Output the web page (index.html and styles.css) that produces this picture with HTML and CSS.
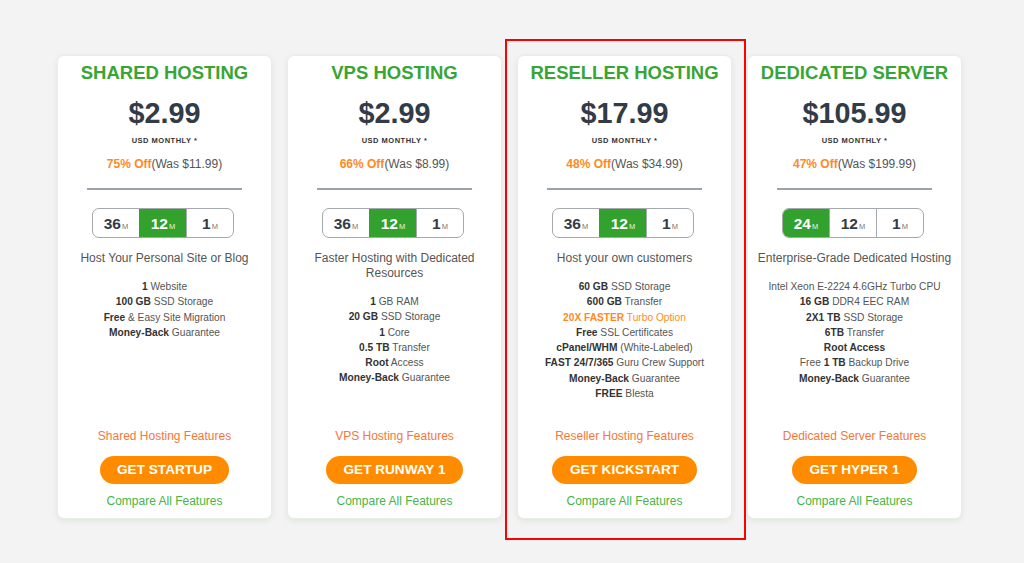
FILE: index.html
```html
<!DOCTYPE html>
<html>
<head>
<meta charset="utf-8">
<link rel="stylesheet" href="styles.css">
</head>
<body>
<div class="plans">
  <div class="card">
    <h2 class="title">SHARED HOSTING</h2>
    <div class="price">$2.99</div>
    <div class="period">USD MONTHLY *</div>
    <div class="discount"><b>75% Off</b>(Was $11.99)</div>
    <hr class="divider">
    <div class="terms">
      <span class="term">36<small>M</small></span>
      <span class="term active">12<small>M</small></span>
      <span class="term">1<small>M</small></span>
    </div>
    <p class="tagline">Host Your Personal Site or Blog</p>
    <ul class="features">
      <li><b>1</b> Website</li>
      <li><b>100 GB</b> SSD Storage</li>
      <li><b>Free</b> &amp; Easy Site Migration</li>
      <li><b>Money-Back</b> Guarantee</li>
    </ul>
    <a class="more">Shared Hosting Features</a>
    <a class="btn">GET STARTUP</a>
    <a class="compare">Compare All Features</a>
  </div>

  <div class="card">
    <h2 class="title">VPS HOSTING</h2>
    <div class="price">$2.99</div>
    <div class="period">USD MONTHLY *</div>
    <div class="discount"><b>66% Off</b>(Was $8.99)</div>
    <hr class="divider">
    <div class="terms">
      <span class="term">36<small>M</small></span>
      <span class="term active">12<small>M</small></span>
      <span class="term">1<small>M</small></span>
    </div>
    <p class="tagline">Faster Hosting with Dedicated Resources</p>
    <ul class="features">
      <li><b>1</b> GB RAM</li>
      <li><b>20 GB</b> SSD Storage</li>
      <li><b>1</b> Core</li>
      <li><b>0.5 TB</b> Transfer</li>
      <li><b>Root</b> Access</li>
      <li><b>Money-Back</b> Guarantee</li>
    </ul>
    <a class="more">VPS Hosting Features</a>
    <a class="btn">GET RUNWAY 1</a>
    <a class="compare">Compare All Features</a>
  </div>

  <div class="card">
    <h2 class="title">RESELLER HOSTING</h2>
    <div class="price">$17.99</div>
    <div class="period">USD MONTHLY *</div>
    <div class="discount"><b>48% Off</b>(Was $34.99)</div>
    <hr class="divider">
    <div class="terms">
      <span class="term">36<small>M</small></span>
      <span class="term active">12<small>M</small></span>
      <span class="term">1<small>M</small></span>
    </div>
    <p class="tagline">Host your own customers</p>
    <ul class="features">
      <li><b>60 GB</b> SSD Storage</li>
      <li><b>600 GB</b> Transfer</li>
      <li class="hot"><b>20X FASTER</b> Turbo Option</li>
      <li><b>Free</b> SSL Certificates</li>
      <li><b>cPanel/WHM</b> (White-Labeled)</li>
      <li><b>FAST 24/7/365</b> Guru Crew Support</li>
      <li><b>Money-Back</b> Guarantee</li>
      <li><b>FREE</b> Blesta</li>
    </ul>
    <a class="more">Reseller Hosting Features</a>
    <a class="btn">GET KICKSTART</a>
    <a class="compare">Compare All Features</a>
  </div>

  <div class="card">
    <h2 class="title">DEDICATED SERVER</h2>
    <div class="price">$105.99</div>
    <div class="period">USD MONTHLY *</div>
    <div class="discount"><b>47% Off</b>(Was $199.99)</div>
    <hr class="divider">
    <div class="terms">
      <span class="term active">24<small>M</small></span>
      <span class="term">12<small>M</small></span>
      <span class="term">1<small>M</small></span>
    </div>
    <p class="tagline">Enterprise-Grade Dedicated Hosting</p>
    <ul class="features">
      <li>Intel Xeon E-2224 4.6GHz Turbo CPU</li>
      <li><b>16 GB</b> DDR4 EEC RAM</li>
      <li><b>2X1 TB</b> SSD Storage</li>
      <li><b>6TB</b> Transfer</li>
      <li><b>Root Access</b></li>
      <li>Free <b>1 TB</b> Backup Drive</li>
      <li><b>Money-Back</b> Guarantee</li>
    </ul>
    <a class="more">Dedicated Server Features</a>
    <a class="btn">GET HYPER 1</a>
    <a class="compare">Compare All Features</a>
  </div>

  <div class="highlight"></div>
</div>
</body>
</html>
```

FILE: styles.css
```css
* { box-sizing: border-box; }

html, body {
  margin: 0;
  padding: 0;
}

body {
  background: #f3f3f3;
  font-family: "Liberation Sans", Arial, sans-serif;
  width: 1024px;
  height: 563px;
  overflow: hidden;
}

.plans {
  position: relative;
  display: flex;
  gap: 15px;
  padding: 55px 0 0 57px;
}

.card {
  width: 215px;
  height: 464px;
  background: #ffffff;
  border: 1.5px solid #e6f1dd;
  border-radius: 7px;
  box-shadow: 0 2px 6px rgba(0, 0, 0, 0.07);
  display: flex;
  flex-direction: column;
  align-items: center;
  text-align: center;
  padding: 6px 0 9px;
}

.title {
  margin: 0;
  font-size: 18.5px;
  line-height: 22px;
  font-weight: 700;
  color: #38a535;
  white-space: nowrap;
}

.price {
  margin-top: 12px;
  font-size: 28.8px;
  line-height: 34px;
  font-weight: 700;
  color: #323c47;
}

.period {
  margin-top: 6px;
  font-size: 7.5px;
  line-height: 10px;
  font-weight: 700;
  letter-spacing: 0.5px;
  color: #333;
}

.discount {
  margin-top: 11px;
  font-size: 12px;
  line-height: 14px;
  color: #555;
}

.discount b {
  color: #ff8a1f;
}

.divider {
  margin: 17px 0 0;
  width: 155px;
  height: 2px;
  border: 0;
  background: #9aa3ac;
}

.terms {
  margin: 18px 3px 0 0;
  display: flex;
  width: 142px;
  height: 30px;
  border: 1px solid #a4a9ae;
  border-radius: 7px;
  overflow: hidden;
}

.term {
  flex: 1;
  display: flex;
  align-items: center;
  justify-content: center;
  font-size: 15.5px;
  font-weight: 700;
  color: #333c46;
  border-left: 1px solid #a4a9ae;
  padding-top: 1px;
}

.term:first-child {
  border-left: 0;
}

.term small {
  font-size: 7.5px;
  font-weight: 400;
  color: #777;
  margin-left: 1px;
  margin-top: 5px;
}

.term.active {
  background: #33a12d;
  color: #ffffff;
  border-left-color: #33a12d;
}

.term.active small {
  color: #e6f5e4;
}

.term.active + .term {
  border-left-color: #a4a9ae;
}

.tagline {
  margin: 13px 8px 0;
  font-size: 12px;
  line-height: 15px;
  color: #555;
}

.features {
  flex: 1;
  list-style: none;
  margin: 13px 0 0;
  padding: 0;
  font-size: 10.2px;
  line-height: 15.3px;
  color: #555;
  white-space: nowrap;
}

.features b {
  color: #333;
}

.features .hot,
.features .hot b {
  color: #ff8a1f;
}

.more {
  font-size: 12px;
  line-height: 15px;
  color: #f5773a;
}

.btn {
  margin-top: 12px;
  height: 28.5px;
  padding: 0 17.5px;
  border-radius: 15px;
  background: #ff8c00;
  color: #ffffff;
  font-size: 13.6px;
  font-weight: 700;
  display: flex;
  align-items: center;
  white-space: nowrap;
}

.compare {
  margin-top: 10px;
  font-size: 12px;
  line-height: 15px;
  color: #46b545;
}

.highlight {
  position: absolute;
  left: 505px;
  top: 39px;
  width: 241px;
  height: 501px;
  border: 2px solid #ff0000;
  pointer-events: none;
}
```
